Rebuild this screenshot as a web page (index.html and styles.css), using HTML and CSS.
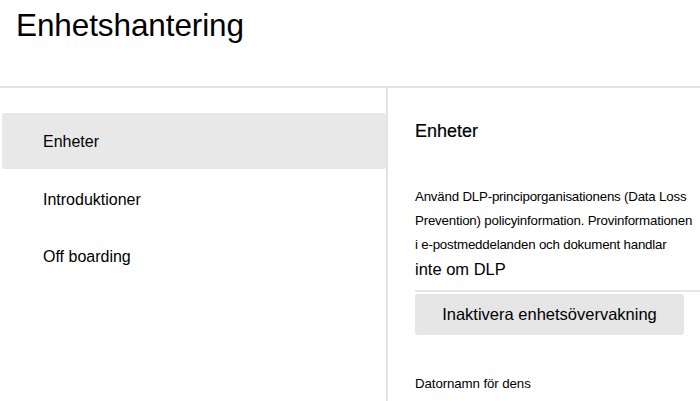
FILE: index.html
```html
<!DOCTYPE html>
<html lang="sv">
<head>
<meta charset="utf-8">
<title>Enhetshantering</title>
<link rel="stylesheet" href="styles.css">
</head>
<body>
<header class="header">
  <h1 class="title">Enhetshantering</h1>
</header>
<div class="main">
  <nav class="nav">
    <div class="nav-item is-selected">Enheter</div>
    <div class="nav-item">Introduktioner</div>
    <div class="nav-item">Off boarding</div>
  </nav>
  <section class="content">
    <h2 class="content-title">Enheter</h2>
    <p class="desc"><span class="line">Använd DLP-principorganisationens (Data Loss</span><span class="line">Prevention) policyinformation. Provinformationen</span><span class="line">i e-postmeddelanden och dokument handlar</span></p>
    <p class="desc-large">inte om DLP</p>
    <div class="divider"></div>
    <button class="btn" type="button">Inaktivera enhetsövervakning</button>
    <p class="label">Datornamn för dens</p>
  </section>
</div>
</body>
</html>
```

FILE: styles.css
```css
html, body {
  margin: 0;
  padding: 0;
  background: #ffffff;
  overflow: hidden;
}
body {
  font-family: "Liberation Sans", Arial, sans-serif;
  color: #000000;
  width: 700px;
  height: 401px;
}
.header {
  height: 88px;
  border-bottom: 2px solid #e3e3e3;
  box-sizing: border-box;
  padding-left: 16px;
}
.title {
  margin: 0;
  padding-top: 7px;
  font-size: 31.5px;
  font-weight: normal;
  line-height: 36px;
  letter-spacing: -0.1px;
}
.main {
  display: flex;
  height: 313px;
}
.nav {
  width: 386px;
  border-right: 2px solid #e3e3e3;
  padding-top: 25px;
  display: flex;
  flex-direction: column;
  gap: 1.5px;
}
.nav-item {
  height: 56px;
  margin-left: 2px;
  padding-left: 41px;
  padding-top: 2px;
  box-sizing: border-box;
  display: flex;
  align-items: center;
  font-size: 16px;
  border-radius: 2px;
}
.nav-item.is-selected {
  background: #e8e8e8;
}
.content {
  flex: 1;
  padding-left: 27px;
  padding-top: 32px;
}
.content-title {
  margin: 0;
  font-size: 18px;
  font-weight: normal;
  line-height: 22px;
  -webkit-text-stroke: 0.2px #000;
}
.desc {
  margin: 43px 0 0 0;
  font-size: 13.3px;
  line-height: 24px;
  letter-spacing: -0.2px;
}
.line {
  display: block;
  white-space: nowrap;
}
.desc-large {
  margin: 0;
  font-size: 16.5px;
  line-height: 24px;
}
.divider {
  margin-top: 9px;
  height: 2px;
  background: #e6e6e6;
}
.btn {
  display: block;
  margin-top: 2px;
  width: 269px;
  height: 41px;
  border: none;
  border-radius: 3px;
  background: #e6e6e6;
  font-family: "Liberation Sans", Arial, sans-serif;
  font-size: 16.5px;
  color: #000;
  padding: 0;
}
.label {
  margin: 41px 0 0 0;
  font-size: 13.3px;
  line-height: 16px;
  letter-spacing: -0.1px;
}
```
